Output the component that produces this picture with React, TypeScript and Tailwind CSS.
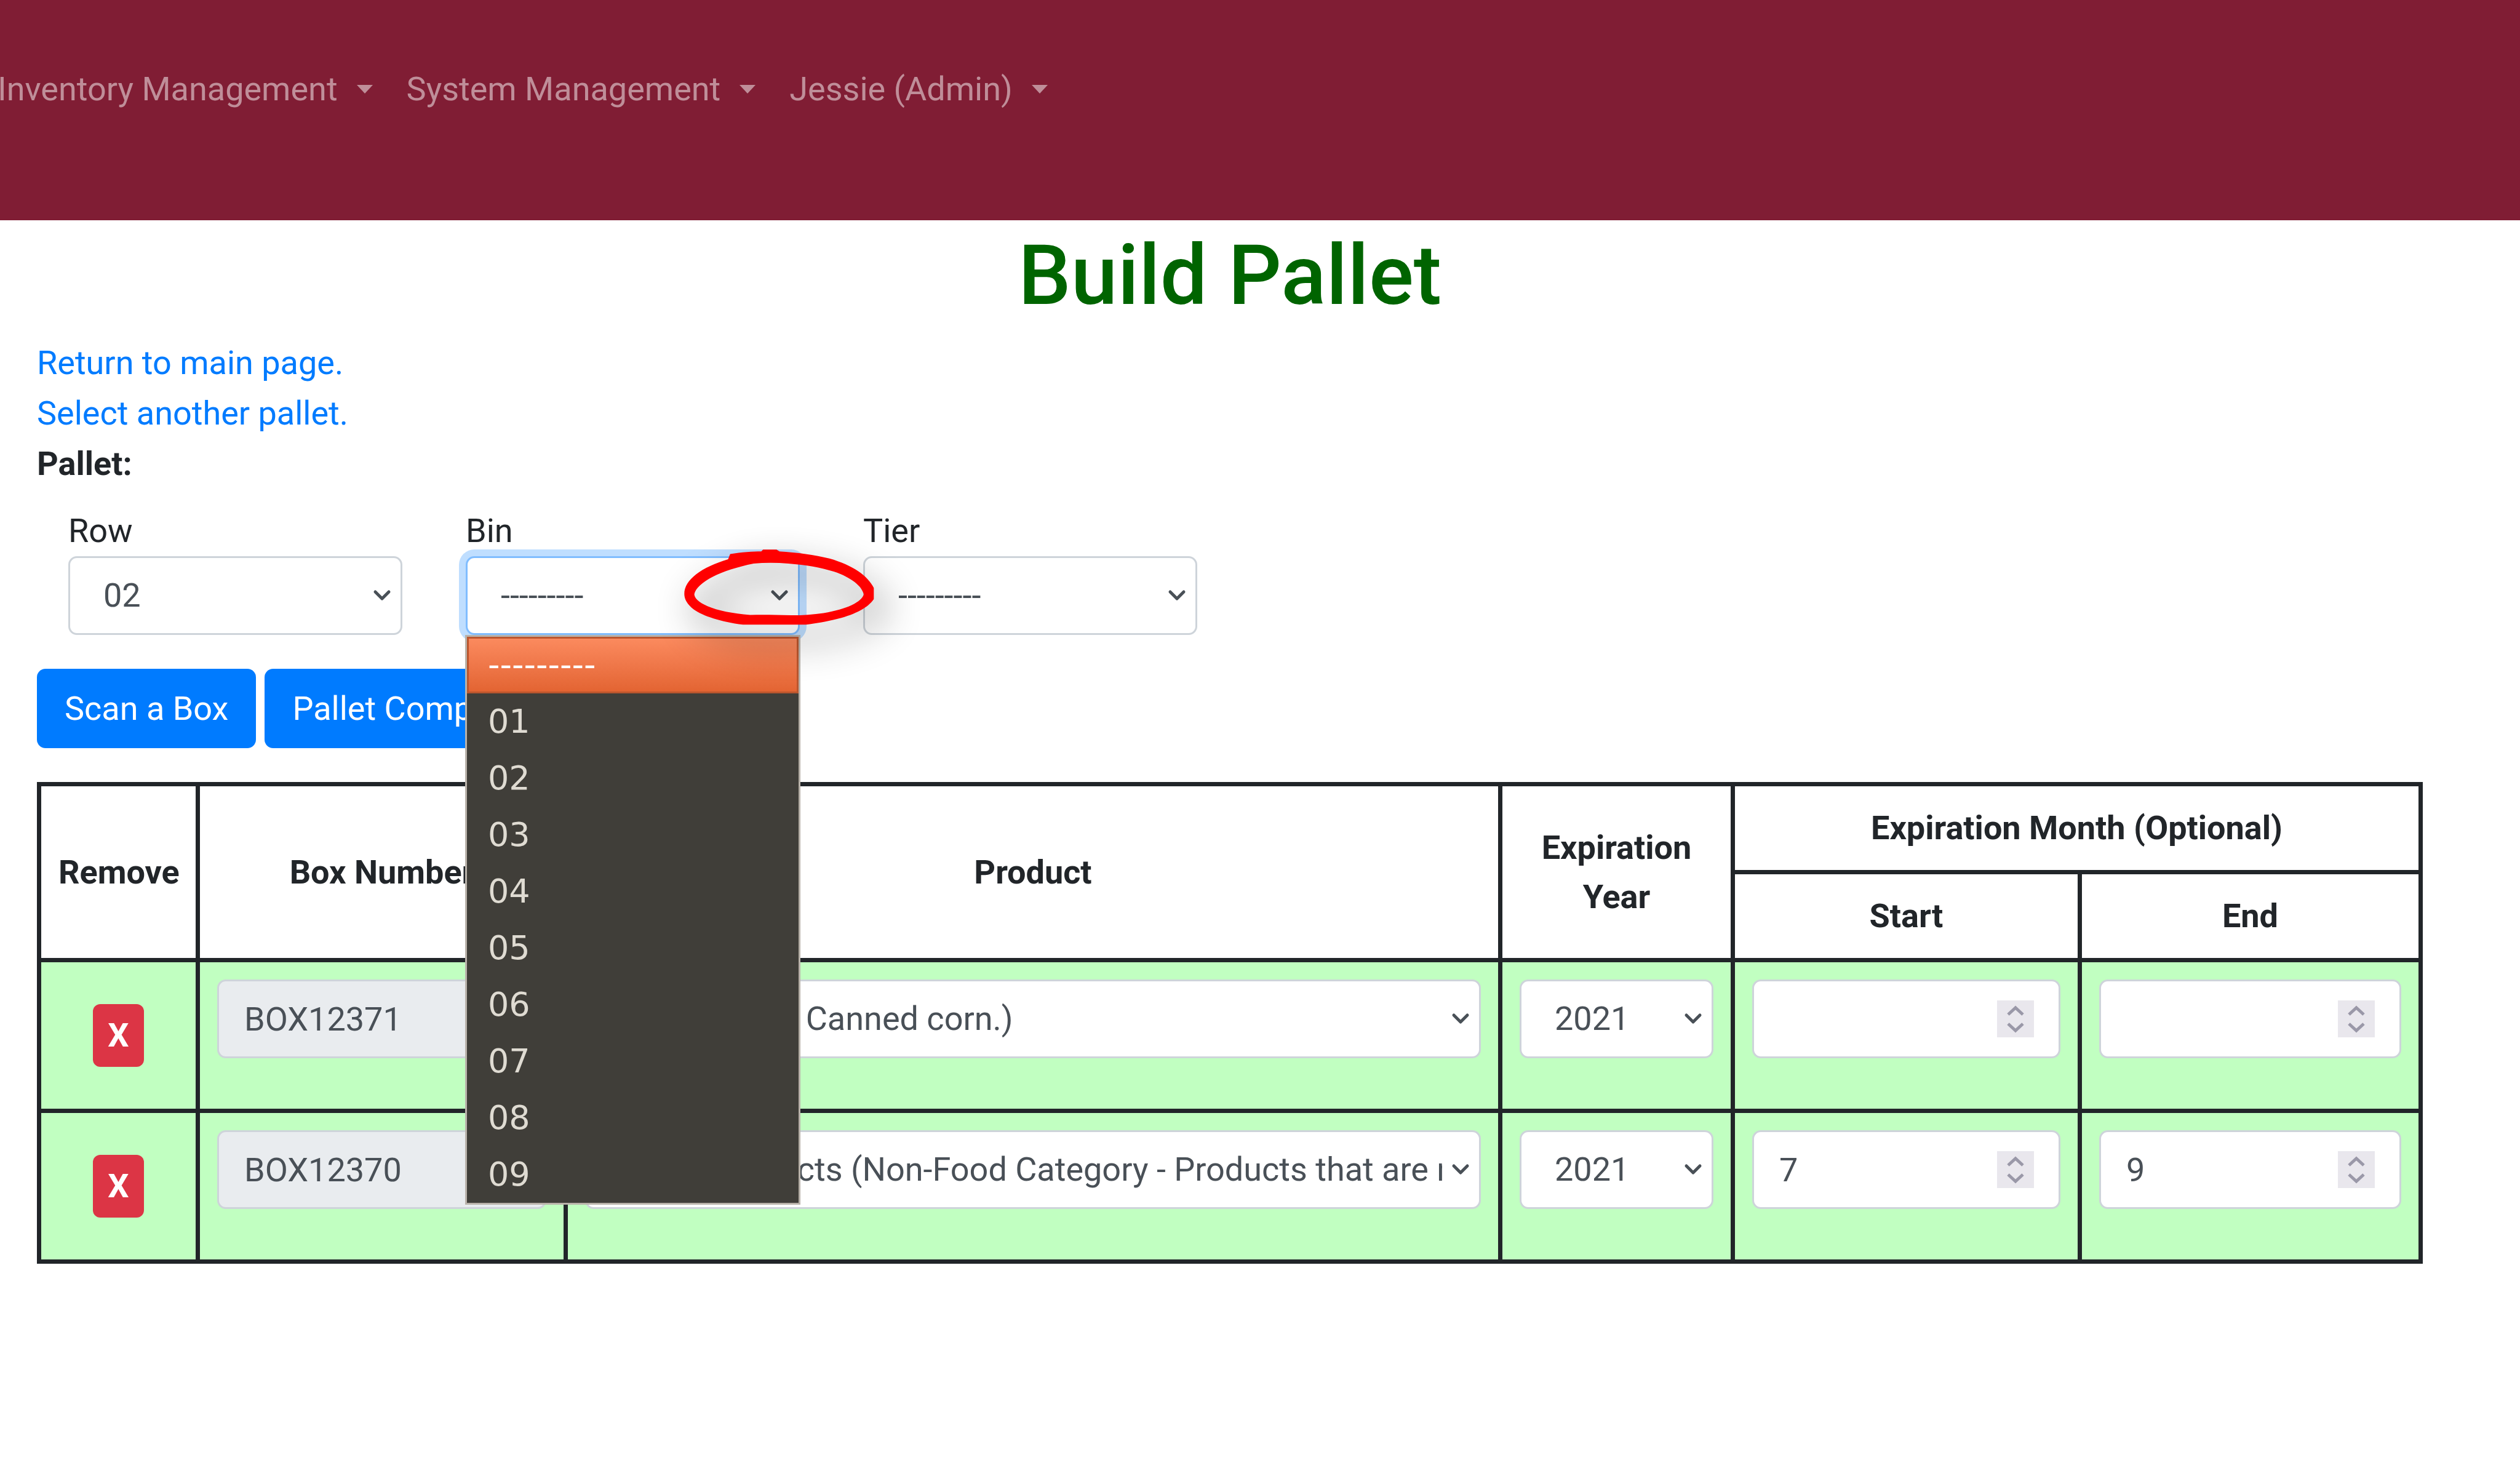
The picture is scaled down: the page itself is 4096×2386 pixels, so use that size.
import React from 'react';

const controlBase =
  'block w-full h-[128px] appearance-none rounded-[14px] border-[3px] bg-white text-[54px] text-[#495057] outline-none';

function Chevron() {
  return (
    <svg
      className="pointer-events-none absolute right-[18px] top-1/2 h-[20px] w-[30px] -translate-y-1/2"
      viewBox="0 0 30 20"
      fill="none"
      stroke="#495057"
      strokeWidth="5"
      strokeLinecap="round"
      strokeLinejoin="round"
      aria-hidden="true"
    >
      <path d="M4 4 L15 15 L26 4" />
    </svg>
  );
}

type SelectProps = {
  id?: string;
  label?: string;
  options: string[];
  focused?: boolean;
};

function SelectField({ id, label, options, focused }: SelectProps) {
  return (
    <div className="relative">
      <select
        id={id}
        aria-label={label}
        defaultValue={options[0]}
        className={
          controlBase +
          ' pl-[54px] pr-[60px] ' +
          (focused ? 'border-[#80bdff] ring-[11px] ring-[#bfdeff]' : 'border-[#ced4da]')
        }
      >
        {options.map((option) => (
          <option key={option} value={option}>
            {option}
          </option>
        ))}
      </select>
      <Chevron />
    </div>
  );
}

function MonthField({ label, value }: { label: string; value: string }) {
  return (
    <div className="relative mb-[54px]">
      <input
        type="number"
        min={1}
        max={12}
        aria-label={label}
        defaultValue={value}
        className={
          controlBase +
          ' border-[#ced4da] pl-[41px] pr-[110px] [appearance:textfield] [&::-webkit-inner-spin-button]:appearance-none'
        }
      />
      <svg
        className="pointer-events-none absolute right-[43px] top-1/2 h-[60px] w-[60px] -translate-y-1/2 bg-[#e9e7ed]"
        viewBox="0 0 60 60"
        fill="none"
        stroke="#9a98a8"
        strokeWidth="5"
        aria-hidden="true"
      >
        <path d="M18 23 L30 12 L42 23" />
        <path d="M18 38 L30 49 L42 38" />
      </svg>
    </div>
  );
}

const navItems = ['Inventory Management', 'System Management', 'Jessie (Admin)'];
const binOptions = ['01', '02', '03', '04', '05', '06', '07', '08', '09'];
const blank = '---------';

const boxes = [
  { number: 'BOX12371', product: 'Corn (Corn - Canned corn.)', year: '2021', start: '', end: '' },
  {
    number: 'BOX12370',
    product: 'Other Products (Non-Food Category - Products that are not food items.)',
    year: '2021',
    start: '7',
    end: '9',
  },
];

function NavBar() {
  return (
    <header className="overflow-hidden bg-[#801d34] pt-[104px] pb-[172px]">
      <nav className="-ml-[30px] flex leading-[82px] text-[#bf8e99]">
        {navItems.map((item) => (
          <a key={item} href="#" className="flex items-center gap-[28px] px-[26px] whitespace-nowrap">
            {item}
            <svg className="h-[16px] w-[32px]" viewBox="0 0 32 16" fill="currentColor" aria-hidden="true">
              <path d="M3 1 H29 L16 15 Z" />
            </svg>
          </a>
        ))}
      </nav>
    </header>
  );
}

function BinMenu() {
  return (
    <ul
      role="listbox"
      aria-label="Bin options"
      className="absolute inset-x-[-1px] top-[128px] z-20 border-[3px] border-[#b9b2aa] bg-[#403e39] font-['DejaVu_Sans',sans-serif] text-[54px] leading-[92px] text-[#dfdbd2]"
    >
      <li
        role="option"
        aria-selected="true"
        className="h-[92px] border-[3px] border-[#bb562e] bg-linear-to-b from-[#fb8a5e] to-[#e36432] pl-[31px] leading-[86px] text-white"
      >
        {blank}
      </li>
      {binOptions.map((option) => (
        <li key={option} role="option" aria-selected="false" className="h-[92px] pl-[34px]">
          {option}
        </li>
      ))}
    </ul>
  );
}

function RedCircle() {
  return (
    <svg
      className="pointer-events-none absolute left-[319px] top-[-26px] z-30 h-[243px] w-[382px] overflow-visible drop-shadow-[16px_26px_30px_rgba(0,0,0,0.45)]"
      viewBox="760 200 800 800"
      preserveAspectRatio="none"
      aria-hidden="true"
    >
      <path
        fill="#ff0000"
        fillRule="evenodd"
        d="M985 302 L992 274 C1030 264 1070 260 1098 260 L1104 250 L1150 250 L1160 260 C1220 266 1280 278 1330 298 C1410 334 1460 390 1481 455 L1481 515 C1462 560 1420 595 1360 620 C1320 636 1285 646 1250 652 L1036 652 C960 636 900 606 868 570 C846 544 836 515 836 488 C836 410 895 345 985 302 Z
           M1072 325 C1110 320 1150 320 1190 325 C1250 332 1300 346 1345 368 C1405 400 1440 445 1447 490 C1440 530 1390 570 1310 590 C1275 598 1240 602 1200 602 C1150 600 1110 598 1060 600 C1000 592 950 577 915 553 C885 532 870 510 870 488 C880 425 960 360 1072 325 Z"
      />
    </svg>
  );
}

export default function App() {
  return (
    <div className="min-h-screen overflow-hidden bg-white font-[Roboto,sans-serif] text-[54px] leading-[82px] text-[#212529]">
      <NavBar />
      <main className="pt-[8px] pl-[60px] pr-[158px]">
        <h1 className="mb-[20px] text-center text-[136px] font-medium leading-[163px] text-[#006400]">
          Build Pallet
        </h1>
        <div className="flex flex-col items-start">
          <a href="#" className="text-[#007bff]">
            Return to main page.
          </a>
          <a href="#" className="text-[#007bff]">
            Select another pallet.
          </a>
          <strong className="font-bold">Pallet:</strong>
        </div>

        <form className="mt-[27px] flex gap-[103px] pl-[51px]">
          <div className="w-[543px]">
            <label htmlFor="row" className="block">
              Row
            </label>
            <SelectField id="row" options={['02']} />
          </div>
          <div className="w-[543px]">
            <label htmlFor="bin" className="block">
              Bin
            </label>
            <div className="relative">
              <SelectField id="bin" options={[blank, ...binOptions]} focused />
              <BinMenu />
              <RedCircle />
            </div>
          </div>
          <div className="w-[543px]">
            <label htmlFor="tier" className="block">
              Tier
            </label>
            <SelectField id="tier" options={[blank]} />
          </div>
        </form>

        <div className="my-[55px] flex gap-[14px]">
          <button type="button" className="h-[129px] rounded-[14px] bg-[#007bff] px-[45px] text-white">
            Scan a Box
          </button>
          <button type="button" className="h-[129px] rounded-[14px] bg-[#007bff] px-[45px] text-white">
            Pallet Complete
          </button>
        </div>

        <table className="w-full table-fixed border-collapse text-center [&_td]:border-[7px] [&_td]:border-[#212529] [&_td]:p-[28px] [&_th]:border-[7px] [&_th]:border-[#212529] [&_th]:p-[28px] [&_th]:align-middle [&_th]:leading-20 [&_th]:font-bold">
          <colgroup>
            <col className="w-[258px]" />
            <col className="w-[598px]" />
            <col />
            <col className="w-[378px]" />
            <col className="w-[564px]" />
            <col className="w-[554px]" />
          </colgroup>
          <thead>
            <tr>
              <th rowSpan={2}>Remove</th>
              <th rowSpan={2}>Box Number</th>
              <th rowSpan={2}>Product</th>
              <th rowSpan={2}>Expiration Year</th>
              <th colSpan={2}>Expiration Month (Optional)</th>
            </tr>
            <tr>
              <th>Start</th>
              <th>End</th>
            </tr>
          </thead>
          <tbody>
            {boxes.map((box) => (
              <tr key={box.number} className="bg-[#c1ffc1]">
                <td className="align-middle">
                  <button
                    type="button"
                    aria-label={'Remove ' + box.number}
                    className="mx-auto block h-[102px] rounded-[12px] bg-[#dc3545] px-[24px] font-bold text-white"
                  >
                    X
                  </button>
                </td>
                <td>
                  <input
                    type="text"
                    readOnly
                    aria-label="Box number"
                    defaultValue={box.number}
                    className="mb-[54px] block h-[128px] w-full rounded-[14px] border-[3px] border-[#ced4da] bg-[#e9ecef] px-[41px] text-[54px] text-[#495057] outline-none"
                  />
                </td>
                <td>
                  <div className="mb-[54px]">
                    <SelectField label="Product" options={[box.product]} />
                  </div>
                </td>
                <td>
                  <div className="mb-[54px]">
                    <SelectField label="Expiration year" options={[box.year]} />
                  </div>
                </td>
                <td>
                  <MonthField label="Expiration month start" value={box.start} />
                </td>
                <td>
                  <MonthField label="Expiration month end" value={box.end} />
                </td>
              </tr>
            ))}
          </tbody>
        </table>
      </main>
    </div>
  );
}
